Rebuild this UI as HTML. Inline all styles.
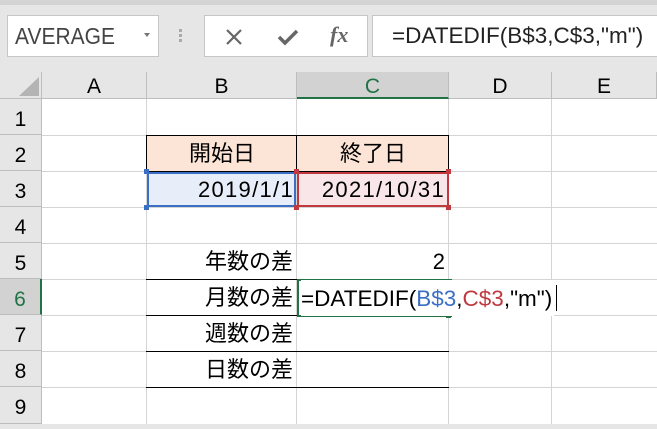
<!DOCTYPE html><html><head><meta charset="utf-8"><style>
*{margin:0;padding:0;box-sizing:border-box}
body{width:657px;height:424px;overflow:hidden;background:#e6e6e6;position:relative;font-family:"Liberation Sans","Noto Sans CJK JP",sans-serif}
.a{position:absolute}
.box{position:absolute;background:#fff;border:1px solid #c6c6c6;top:15px;height:42px}
.ch{position:absolute;top:72px;height:27px;text-align:center;font-size:21px;line-height:29px;color:#000;border-right:1px solid #bdbdbd;border-bottom:1px solid #bdbdbd}
.rh{position:absolute;left:0;width:42px;height:36px;font-size:21px;text-align:center;line-height:42px;border-bottom:1px solid #bdbdbd;border-right:1px solid #bdbdbd;background:#e6e6e6}
.vl{position:absolute;top:99px;width:1px;height:325px;background:#d4d4d4}
.hl{position:absolute;left:42px;width:615px;height:1px;background:#d4d4d4}
.t{position:absolute;font-size:22px;line-height:38px;height:36px;white-space:nowrap}
.n{letter-spacing:1.3px}
.bl{position:absolute;height:1px;background:#000}
</style></head><body>
<div class="a" style="left:0;top:0;width:657px;height:5px;background:#d4d4d4"></div>
<div class="box" style="left:7px;width:152px"><span class="a" style="left:7px;top:8px;font-size:21px;color:#444;transform:scaleY(1.1);transform-origin:top left">AVERAGE</span><span class="a" style="left:136px;top:17px;width:0;height:0;border-left:3px solid transparent;border-right:3px solid transparent;border-top:4px solid #777"></span></div>
<div class="a" style="left:179px;top:29px;width:3px;height:3px;background:#aaa;box-shadow:0 5px 0 #aaa,0 10px 0 #aaa"></div>
<div class="box" style="left:204px;width:164px">
<svg class="a" style="left:20px;top:12px" width="18" height="18"><path d="M2 2L16 16M16 2L2 16" stroke="#666" stroke-width="2.2"/></svg>
<svg class="a" style="left:72px;top:12px" width="22" height="18"><path d="M2 9L8 15L20 3" stroke="#666" stroke-width="3.5" fill="none"/></svg>
<span class="a" style="left:125px;top:6px;font-family:'Liberation Serif',serif;font-style:italic;font-weight:bold;font-size:22px;color:#666">fx</span></div>
<div class="box" style="left:372px;width:290px;border-right:none"><span class="a" style="left:19px;top:7px;font-size:22.5px;color:#222;white-space:nowrap">=DATEDIF(B$3,C$3,"m")</span></div>
<div class="a" style="left:0;top:72px;width:42px;height:27px;border-right:1px solid #bdbdbd;border-bottom:1px solid #bdbdbd"></div>
<svg class="a" style="left:19px;top:77px" width="21" height="20"><path d="M20 0L20 19L0 19Z" fill="#b4b4b4"/></svg>
<div class="ch" style="left:42px;width:105px">A</div>
<div class="ch" style="left:147px;width:150px">B</div>
<div class="ch" style="left:297px;width:152px;background:#d2d2d2;color:#217346;border-bottom:2px solid #217346">C</div>
<div class="ch" style="left:449px;width:103px">D</div>
<div class="ch" style="left:552px;width:105px">E</div>
<div class="a" style="left:42px;top:99px;width:615px;height:325px;background:#fff"></div>
<div class="vl" style="left:146px"></div><div class="vl" style="left:296px"></div><div class="vl" style="left:448px"></div><div class="vl" style="left:551px"></div>
<div class="hl" style="top:135px"></div><div class="hl" style="top:171px"></div><div class="hl" style="top:207px"></div><div class="hl" style="top:243px"></div><div class="hl" style="top:279px"></div><div class="hl" style="top:315px"></div><div class="hl" style="top:351px"></div><div class="hl" style="top:387px"></div>
<div class="rh" style="top:99px">1</div><div class="rh" style="top:135px">2</div><div class="rh" style="top:171px">3</div><div class="rh" style="top:207px">4</div><div class="rh" style="top:243px">5</div>
<div class="rh" style="top:279px;background:#d2d2d2;color:#217346;border-right:2px solid #217346">6</div>
<div class="rh" style="top:315px">7</div><div class="rh" style="top:351px">8</div><div class="rh" style="top:387px;height:37px">9</div>
<div class="a" style="left:146px;top:135px;width:303px;height:37px;background:#fce4d6;border:1px solid #000"></div>
<div class="a" style="left:296px;top:135px;width:1px;height:37px;background:#000"></div>
<div class="t" style="left:147px;top:135px;width:150px;text-align:center">開始日</div>
<div class="t" style="left:297px;top:135px;width:152px;text-align:center">終了日</div>
<div class="a" style="left:147px;top:172px;width:149px;height:35px;background:#e7eef9;border:2px solid #3a6fc5"></div>
<div class="a" style="left:297px;top:172px;width:152px;height:35px;background:#f8e6e8;border:2px solid #c0393f"></div>
<div class="a" style="left:144px;top:169px;width:5px;height:5px;background:#3a6fc5"></div>
<div class="a" style="left:144px;top:205px;width:5px;height:5px;background:#3a6fc5"></div>
<div class="a" style="left:294px;top:169px;width:5px;height:5px;background:#c0393f"></div>
<div class="a" style="left:294px;top:205px;width:5px;height:5px;background:#c0393f"></div>
<div class="a" style="left:446px;top:169px;width:5px;height:5px;background:#c0393f"></div>
<div class="a" style="left:446px;top:205px;width:5px;height:5px;background:#c0393f"></div>
<div class="t n" style="left:147px;top:171px;width:147px;text-align:right">2019/1/1</div>
<div class="t n" style="left:297px;top:171px;width:148px;text-align:right">2021/10/31</div>
<div class="bl" style="left:146px;top:279px;width:303px"></div>
<div class="bl" style="left:146px;top:315px;width:303px"></div>
<div class="bl" style="left:146px;top:351px;width:303px"></div>
<div class="bl" style="left:146px;top:387px;width:303px"></div>
<div class="t" style="left:147px;top:243px;width:146px;text-align:right">年数の差</div>
<div class="t" style="left:297px;top:243px;width:148px;text-align:right">2</div>
<div class="t" style="left:147px;top:279px;width:146px;text-align:right">月数の差</div>
<div class="t" style="left:147px;top:315px;width:146px;text-align:right">週数の差</div>
<div class="t" style="left:147px;top:351px;width:146px;text-align:right">日数の差</div>
<div class="a" style="left:297px;top:279px;width:155px;height:38px;border:2px solid #217346;border-right:none;background:#fff"></div>
<div class="a" style="left:446px;top:313px;width:5px;height:5px;background:#217346"></div>
<div class="t" style="left:301px;top:280px;font-size:22.5px;background:#fff;padding-right:2px">=DATEDIF(<span style="color:#3a6fc5">B$3</span>,<span style="color:#c0393f">C$3</span>,"m")</div>
<div class="a" style="left:556px;top:285px;width:1px;height:26px;background:#000"></div>
</body></html>
